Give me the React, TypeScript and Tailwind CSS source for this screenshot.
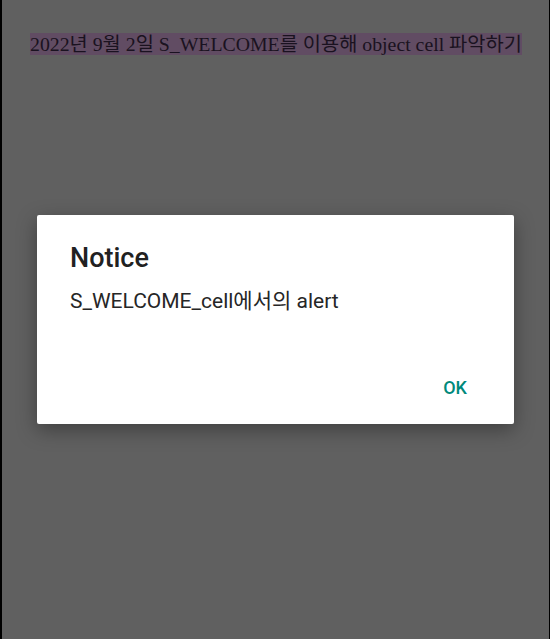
export default function App() {
  return (
    <div className="relative h-[639px] w-[550px] overflow-hidden border-l-2 border-r border-black bg-[#606060]">
      <div className="pl-[28px] pt-[33px]">
        <span className="bg-[#614c63] text-[19.8px] leading-[20px] text-[#1a1220] [font-family:'Liberation_Serif','Noto_Sans_CJK_KR',serif]">
          2022년 9월 2일 S_WELCOME를 이용해 object cell 파악하기
        </span>
      </div>

      {/* alert dialog */}
      <div className="absolute inset-0 flex items-center justify-center">
        <div className="flex h-[209px] w-[477px] flex-col rounded-[2px] bg-white shadow-[0_6px_20px_rgba(0,0,0,0.35)] [font-family:Roboto,'Noto_Sans_CJK_KR',sans-serif]">
          <div className="pl-[33px] pt-[27px]">
            <h2 className="text-[27px] font-medium leading-[32px] text-[#212121]">Notice</h2>
            <p className="mt-[13px] text-[21px] leading-[28px] text-[#262626]">S_WELCOME_cell에서의 alert</p>
          </div>
          <div className="mt-auto flex justify-end pb-[24px] pr-[47px]">
            <button className="text-[18px] font-medium leading-[24px] text-[#00897b]">OK</button>
          </div>
        </div>
      </div>
    </div>
  );
}
